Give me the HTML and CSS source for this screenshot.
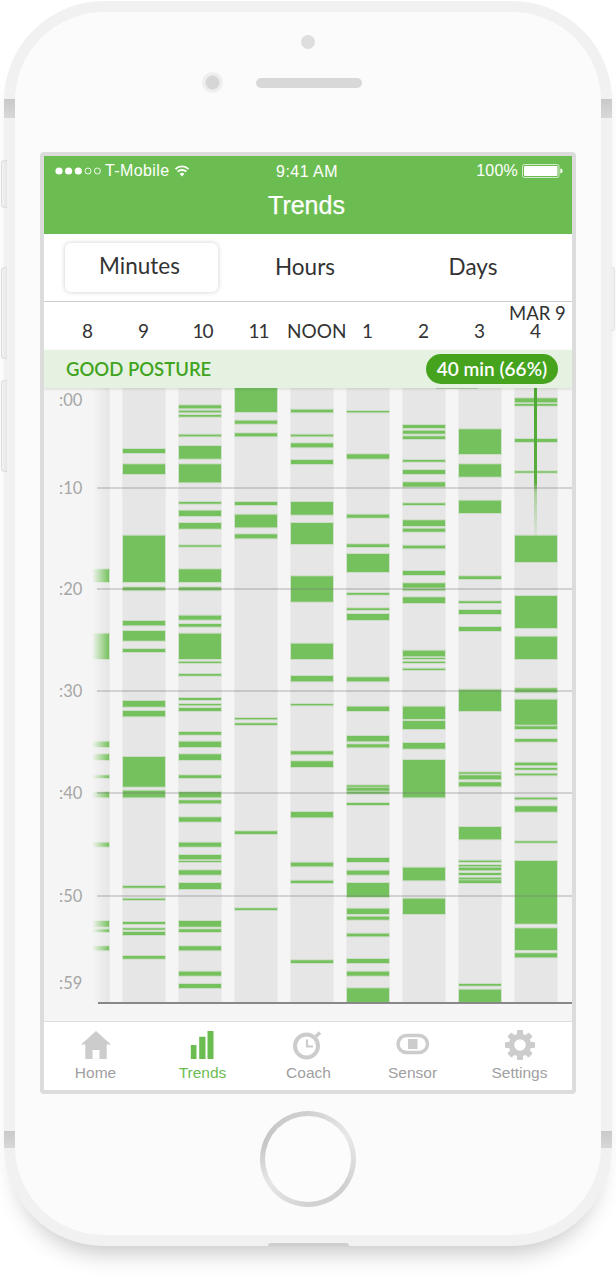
FILE: index.html
```html
<!DOCTYPE html>
<html lang="en">
<head>
<meta charset="utf-8">
<title>Trends</title>
<link rel="stylesheet" href="styles.css">
</head>
<body>
<div class="phone">
  <i class="band band-tl"></i><i class="band band-tr"></i><i class="band band-bl"></i><i class="band band-br"></i>
  <div class="mic"></div>
  <div class="earpiece"><div class="camera"></div><div class="speaker"></div></div>
  <main class="screen">
    <header class="header">
      <div class="status">
        <div class="status-left">
          <svg class="signal" width="48" height="10" viewBox="0 0 48 10"><circle cx="4" cy="5" r="3.6"/><circle cx="13.6" cy="5" r="3.6"/><circle cx="23.3" cy="5" r="3.6"/><circle class="off" cx="33" cy="5" r="3"/><circle class="off" cx="42.4" cy="5" r="3"/></svg>
          <span class="carrier">T-Mobile</span>
          <svg class="wifi" width="16" height="13" viewBox="0 0 16 13"><path d="M8 12.6 5.7 10a3.2 3.2 0 0 1 4.6 0Z" fill="#fff"/><path d="M3.7 7.7a6.1 6.1 0 0 1 8.6 0M1.5 5.1a9.2 9.2 0 0 1 13 0" fill="none" stroke="#fff" stroke-width="1.9"/></svg>
        </div>
        <div class="status-time">9:41 AM</div>
        <div class="status-right">
          <span>100%</span>
          <svg class="battery" width="41" height="14" viewBox="0 0 41 14"><rect x=".5" y=".5" width="36.5" height="13" rx="2" fill="none" stroke="#fff" stroke-opacity=".7"/><rect x="2" y="2" width="33.5" height="10" rx="1" fill="#fff"/><path d="M38.4 4.6c1.4.2 2.1 1.1 2.1 2.4s-.7 2.200-2.100 2.400Z" fill="#fff"/></svg>
        </div>
      </div>
      <h1 class="title">Trends</h1>
    </header>

    <nav class="segments">
      <div class="segment segment-active">Minutes</div>
      <div class="segment">Hours</div>
      <div class="segment">Days</div>
    </nav>

    <div class="hours">
      <div class="hour">8</div>
      <div class="hour">9</div>
      <div class="hour hour-wide">10</div>
      <div class="hour hour-wide">11</div>
      <div class="hour hour-noon">NOON</div>
      <div class="hour">1</div>
      <div class="hour">2</div>
      <div class="hour">3</div>
      <div class="hour"><span class="hour-date">MAR 9</span>4</div>
    </div>

    <div class="posture">
      <span class="posture-label">GOOD POSTURE</span>
      <span class="pill">40 min (66%)</span>
    </div>

    <section class="chart">
      <div class="plot" id="plot"></div>
      <div class="axis"></div>
      <div class="fade"></div>
      <div class="needle"></div>
      <div class="tick t00"><span>:00</span></div>
      <div class="tick t10"><span>:10</span><i></i></div>
      <div class="tick t20"><span>:20</span><i></i></div>
      <div class="tick t30"><span>:30</span><i></i></div>
      <div class="tick t40"><span>:40</span><i></i></div>
      <div class="tick t50"><span>:50</span><i></i></div>
      <div class="tick t59"><span>:59</span></div>
    </section>

    <nav class="tabs">
      <div class="tab">
        <svg width="32" height="30" viewBox="0 0 32 30"><path class="icon" d="M16 1 1 14.500h4.300V29h7.200V20h7V29h7.200V14.500H31Z"/></svg>
        <span>Home</span>
      </div>
      <div class="tab tab-active">
        <svg width="32" height="30" viewBox="0 0 32 30"><path class="icon" d="M3.800 15H9.500V29H3.800ZM12.200 6.700H18.500V29H12.200ZM20.500 1H26.500V29H20.500Z"/></svg>
        <span>Trends</span>
      </div>
      <div class="tab">
        <svg width="32" height="30" viewBox="0 0 32 30"><circle class="icon-line" cx="13.500" cy="16" r="11.500" stroke-width="4"/><path class="icon-line" d="M14 9.500V16.500H20" stroke-width="2.200"/><path class="icon-line" d="M23 6.500 27 2.500" stroke-width="3.500"/></svg>
        <span>Coach</span>
      </div>
      <div class="tab">
        <svg width="36" height="30" viewBox="0 0 36 30"><rect class="icon-line" x="3" y="5.500" width="29.500" height="17" rx="8.500" stroke-width="3.500"/><rect class="icon" x="13" y="9" width="9.500" height="10"/></svg>
        <span>Sensor</span>
      </div>
      <div class="tab">
        <svg width="32" height="30" viewBox="0 0 32 30"><g class="icon"><rect x="13" y="0" width="6" height="30" rx="1"/><rect x="13" y="0" width="6" height="30" rx="1" transform="rotate(45 16 15)"/><rect x="13" y="0" width="6" height="30" rx="1" transform="rotate(90 16 15)"/><rect x="13" y="0" width="6" height="30" rx="1" transform="rotate(135 16 15)"/></g><circle class="icon-line" cx="16" cy="15" r="8.500" stroke-width="5.500"/><circle class="gear-hole" cx="16" cy="15" r="5.800"/></svg>
        <span>Settings</span>
      </div>
    </nav>
  </main>
  <div class="home-button"><div class="home-inner"></div></div>
  <div class="notch"></div>
</div>
<i class="side side-1"></i><i class="side side-2"></i><i class="side side-3"></i><i class="side side-4"></i>
<script src="script.js"></script>
</body>
</html>
```
FILE: styles.css
```css
* { box-sizing: border-box; }
html, body { margin: 0; padding: 0; background: #fff; }
body { position: relative; width: 616px; height: 1284px; overflow: hidden; font-family: "Lato", "Liberation Sans", sans-serif; }

/* device */
.phone {
  position: relative;
  width: 608px; height: 1245px;
  margin: 1px 0 0 4px;
  border: 11px solid #f1f1f1;
  border-radius: 100px;
  background: #fbfbfb;
  display: flex; flex-direction: column; align-items: center;
  box-shadow: 0 20px 24px -14px rgba(0,0,0,.24);
}
.band { position: absolute; width: 11px; background: linear-gradient(#c9c9c9, #d8d8d8); }
.band-tl { left: -11px; top: 87px; height: 19px; }
.band-tr { right: -11px; top: 87px; height: 19px; }
.band-bl { left: -11px; top: 1119px; height: 17px; }
.band-br { right: -11px; top: 1119px; height: 17px; }
.mic { width: 14px; height: 14px; margin-top: 23px; border-radius: 50%; background: #dedede; }
.earpiece { width: 100%; height: 21px; margin-top: 23px; padding-left: 187px; display: flex; align-items: center; gap: 33px; }
.camera { width: 21px; height: 21px; border-radius: 50%; background: radial-gradient(circle, #d6d6d6 0 6px, #e2e2e2 7px, #efefef 7.500px); flex: none; }
.speaker { width: 106px; height: 10px; border-radius: 5px; background: #d8d8d8; flex: none; }
.side { position: absolute; left: 1px; width: 6px; border: 1px solid #dcdcdc; border-right: 0; border-radius: 4px 0 0 4px; background: linear-gradient(90deg, #f3f3f3, #e6e6e6); }
.side-1 { top: 160px; height: 48px; }
.side-2 { top: 267px; height: 92px; }
.side-3 { top: 380px; height: 92px; }
.side-4 { left: 611px; top: 267px; height: 64px; width: 4px; border: 1px solid #e2e2e2; border-left: 0; border-radius: 0 3px 3px 0; background: #f0f0f0; }
.home-button { width: 96px; height: 96px; margin-top: 17px; border-radius: 50%; padding: 5px; background: conic-gradient(#d0d0d0, #e8e8e8 60deg, #cfcfcf 130deg, #d2d2d2 180deg, #e6e6e6 240deg, #c6c6c6 290deg, #d0d0d0); flex: none; }
.home-inner { width: 100%; height: 100%; border-radius: 50%; background: #fcfcfc; }
.notch { position: absolute; left: 253px; bottom: -11px; width: 81px; height: 3px; border-radius: 3px 3px 0 0; background: #cfcfcf; }

/* screen */
.screen { width: 536px; height: 942px; margin-top: 59px; border: 4px solid #dcdcdc; border-radius: 4px; background: #fff; display: flex; flex-direction: column; flex: none; overflow: hidden; }
.header { height: 78px; background: #6cbd51; color: #fff; font-family: "Liberation Sans", Arial, sans-serif; flex: none; }
.status { height: 30px; padding: 0 9px 0 11px; display: grid; grid-template-columns: 1fr auto 1fr; align-items: center; font-size: 16px; }
.status-left { display: flex; align-items: center; }
.signal { fill: #fff; margin-right: 2px; flex: none; }
.signal .off { fill: none; stroke: #fff; stroke-width: .9; }
.carrier { letter-spacing: .4px; }
.wifi { margin-left: 4px; margin-top: -2px; flex: none; }
.status-time { letter-spacing: .45px; padding-top: 2px; padding-right: 4px; }
.status-right { display: flex; align-items: center; justify-content: flex-end; gap: 4px; letter-spacing: .2px; }
.battery { flex: none; }
.title { margin: 0; padding-right: 3px; font-size: 25px; font-weight: 400; text-align: center; line-height: 39px; -webkit-text-stroke: .25px #fff; }

.segments { height: 68px; padding-left: 11px; border-bottom: 1.500px solid #cfcfcf; display: grid; grid-template-columns: 180px 140px 196px; align-items: center; color: #333; font-size: 22.500px; flex: none; }
.segment { text-align: center; padding-bottom: 3px; }
.segment-active { width: 153px; height: 49px; margin: -1px 0 0 10px; padding: 0 4px 0 0; line-height: 46px; border-radius: 6px; background: #fff; box-shadow: 0 0 5px rgba(0,0,0,.2); }

.hours { height: 48px; padding: 0 0 10px 38px; display: flex; align-items: flex-end; color: #333; font-size: 19px; line-height: 18px; letter-spacing: -.8px; flex: none; }
.hour { width: 56px; flex: none; white-space: nowrap; }
.hour-wide { text-indent: -1.500px; letter-spacing: -1.100px; }
.hour-noon { text-indent: -19px; letter-spacing: 0; }
.hour-date { display: block; text-indent: -21px; font-size: 18.500px; letter-spacing: 0; }

.posture { position: relative; z-index: 3; height: 38px; padding: 0 14px 0 22px; display: flex; align-items: center; justify-content: space-between; background: #e6f2e1; box-shadow: 0 1px 3px rgba(0,0,0,.12); flex: none; }
.posture::after { content: ""; position: absolute; left: 392px; bottom: -1px; width: 42px; height: 1px; background: #a9bca3; }
.posture-label { color: #41a41f; font-size: 18.500px; font-weight: 600; }
.pill { width: 132px; height: 30px; border-radius: 15px; background: #45a31e; color: #fff; font-size: 19px; font-weight: 600; line-height: 29px; text-align: center; }

/* chart */
.chart { position: relative; height: 633px; background: #f5f5f5; overflow: hidden; flex: none; }
.plot { height: 614px; padding-left: 23px; display: flex; gap: 14px; }
.col { width: 42px; height: 614px; background: #e6e6e6; box-shadow: 0 0 0 1px #ececec; flex: none; overflow: visible; display: block; }
.bar { fill: #75c15d; stroke: rgba(117,193,93,.22); stroke-width: 2px; paint-order: stroke; }
.axis { position: relative; z-index: 1; height: 2px; margin-left: 54px; background: #888; }
.fade { position: absolute; left: 0; top: 0; width: 65px; height: 100%; background: linear-gradient(90deg, #f5f5f5 0 48px, rgba(245,245,245,0) 65px); }
.needle { position: absolute; left: 489.500px; top: 0; width: 3px; height: 158px; background: linear-gradient(#4ea832, #5bae40 60%, rgba(100,180,70,.45) 66%, rgba(100,180,70,0)); }
.tick { position: absolute; left: 15px; right: 0; height: 20px; display: flex; align-items: center; color: #a6a6a6; font-size: 16.500px; line-height: 20px; }
.tick span { width: 38px; flex: none; }
.tick i { flex: 1; height: 2px; background: rgba(120,120,120,.28); }
.t00 { top: 2px; }
.t10 { top: 90px; }
.t20 { top: 191px; }
.t30 { top: 293px; }
.t40 { top: 395px; }
.t50 { top: 498px; }
.t59 { top: 585px; }

/* tab bar */
.tabs { height: 69px; padding: 8px 0 0 0; border-top: 1.500px solid #dedede; display: flex; background: #fff; flex: 1; font-family: "Liberation Sans", Arial, sans-serif; }
.tab { width: 105px; display: flex; flex-direction: column; align-items: center; color: #a0a0a0; font-size: 15.500px; line-height: 18px; flex: none; }
.tab:nth-child(1) { margin-left: -1px; }
.tab:nth-child(2) { margin-left: 2px; }
.tab:nth-child(3) { margin-left: 1px; }
.tab:nth-child(4) { margin-left: -1px; }
.tab:nth-child(5) { margin-left: 2px; }
.tab svg { margin-bottom: 4px; overflow: visible; }
.tab .icon { fill: #cccccc; }
.tab .icon-line { fill: none; stroke: #cccccc; }
.gear-hole { fill: #fff; }
.tab-active { color: #6cbd51; }
.tab-active .icon { fill: #6cbd51; }
```
FILE: script.js
```js
var data = [
  [569.3,582, 633.7,659, 741.7,747, 754.3,760, 775.3,778, 792,797.3, 842.7,846.7, 921,926.7, 929.3,932, 946.3,950.3],
  [449,453, 464.3,474, 535.7,582, 587.3,590.3, 621,625.3, 631,640.7, 649,652, 701,706.7, 711,716.3, 757,786.7, 790.7,797.3, 886,887.7, 898.7,900, 922,924, 928.3,929.7, 932,935, 956,958.7],
  [405.3,408.3, 410.7,412.3, 415,416.7, 434.7,436.3, 446,458.7, 464.3,482.3, 502,503.7, 510.7,516, 523,528.7, 545.3,546.7, 569.3,582, 587.3,590.3, 615.7,619.7, 624,626.7, 633.7,659, 661.7,663, 674,675.7, 698,700, 704,705.3, 708,711, 732,734.7, 741.7,747, 754.3,760, 775.3,778, 792,797.3, 800.3,803.3, 817.3,821.7, 842.7,846.7, 855,859.3, 861,862, 870.3,874.7, 883,889, 921,926.7, 929.3,932, 946.3,950.3, 971.7,975.7, 984,988],
  [388,412, 420.7,423.7, 433.3,436.3, 502,505, 514.7,527.3, 534.3,538.3, 718,719.3, 723.3,725, 831.3,834, 908.3,910],
  [409.7,412.3, 434.7,436.3, 443.3,447.3, 460,464, 502,514.7, 523,544, 576.3,601.7, 643.7,659, 676,681.3, 704,705.3, 751.3,754.3, 761.3,767, 812,817.3, 862.7,866.3, 880.7,883, 960.3,963],
  [411,412.3, 454.3,458.7, 514.7,517.7, 544.3,547, 554,572, 593,594.7, 608.3,610, 614,620, 677.3,681.3, 706.7,711, 736,741.3, 744.3,747.3, 785.3,786.7, 787.7,790.7, 791.7,793.7, 803,805, 858,862, 870.7,874.7, 883,897, 908.7,914, 916.7,919.7, 933.7,936.3, 959,963, 971.7,975.7, 988.3,1002],
  [425,428, 430.7,433.7, 436.3,439, 460,461.7, 470,474, 482.3,486.7, 503.3,505, 520.3,526, 528.7,531.7, 545.7,548.3, 571,575, 583.3,587.7, 589,590.3, 597.3,603, 650.7,656.3, 658,659, 661.7,663, 668.7,670, 706.7,719, 721,729, 743,748.7, 760,797.3, 867.7,880.3, 898.7,914],
  [429.3,454, 464.3,476.7, 500.7,513, 576.3,579, 601.3,603, 610,614, 627,631, 689.7,711, 772.3,773.7, 775.3,779.3, 782.3,786.3, 827,839.3, 860.7,862, 865,866.3, 867.7,870.3, 873,875, 877.7,879.3, 880.3,883, 984,985.7, 989.7,1002],
  [398.3,402.3, 404,405.7, 439,442, 471.3,472.7, 535.7,562, 596,628, 636.7,659, 688.3,692.3, 699.7,724.7, 726.3,729, 739,741.7, 762.7,765.3, 768,769.7, 773.7,775.3, 797.7,799.3, 806.3,811.7, 841.3,842.7, 861,923.7, 928.3,950, 953.3,957.3]
];
var NS = "http://www.w3.org/2000/svg";
var plot = document.getElementById("plot");
data.forEach(function (bars) {
  var svg = document.createElementNS(NS, "svg");
  svg.setAttribute("class", "col");
  svg.setAttribute("viewBox", "0 388 42 614");
  for (var i = 0; i < bars.length; i += 2) {
    var r = document.createElementNS(NS, "rect");
    r.setAttribute("class", "bar");
    r.setAttribute("x", 0);
    r.setAttribute("y", bars[i]);
    r.setAttribute("width", 42);
    r.setAttribute("height", (bars[i + 1] - bars[i]).toFixed(1));
    svg.appendChild(r);
  }
  plot.appendChild(svg);
});
```
